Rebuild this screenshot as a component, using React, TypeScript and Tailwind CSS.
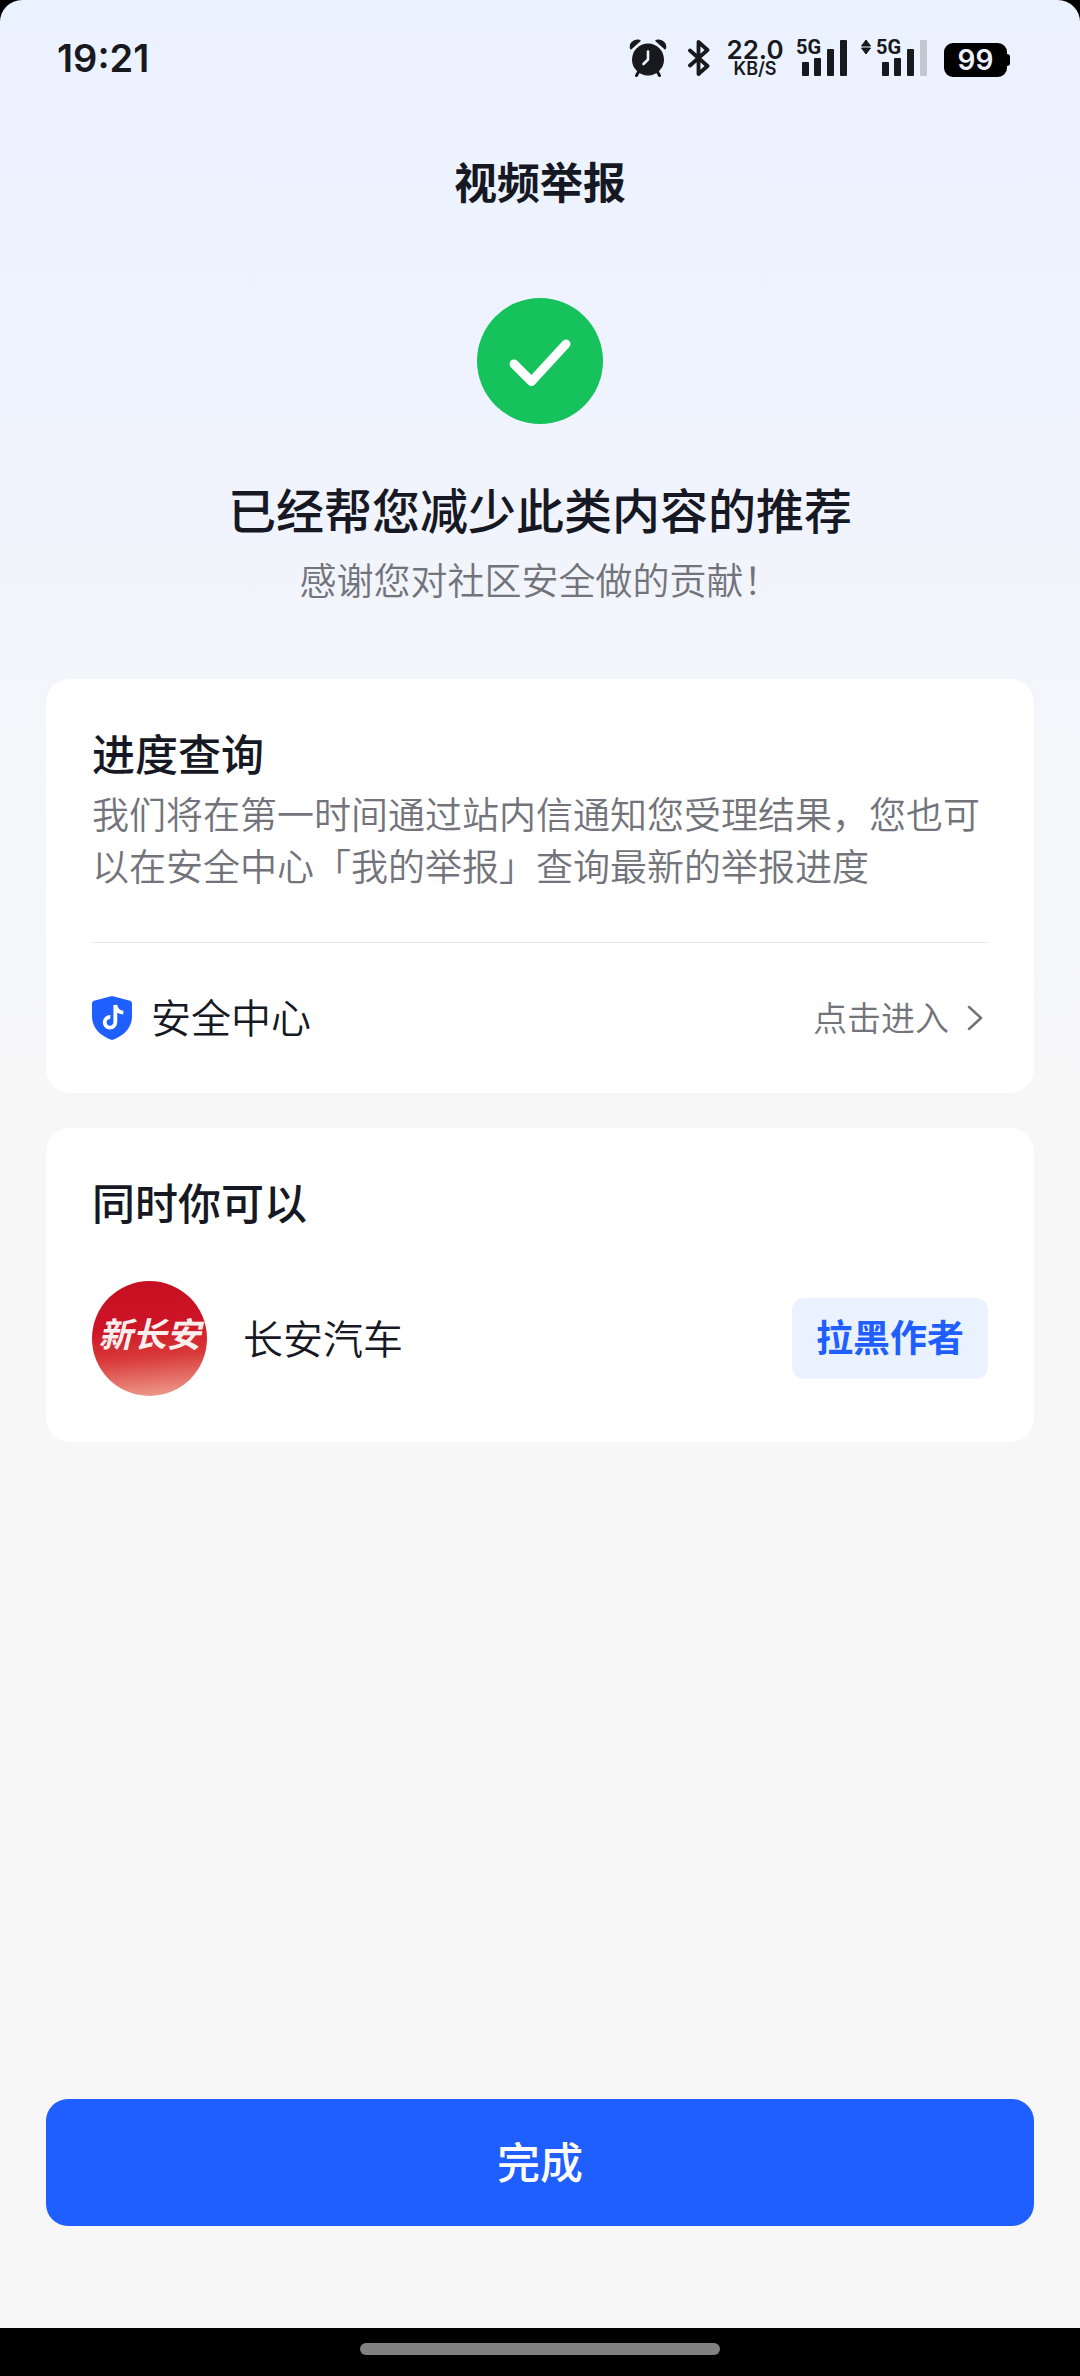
import type { ReactNode } from "react";

function AlarmIcon() {
  return (
    <svg viewBox="0 0 38 38" className="h-[38px] w-[38px]" aria-hidden="true">
      <g fill="#17191c">
        <circle cx="19" cy="20.500" r="16" />
        <path d="M1 9.500C-1 3 8 -2 12 1.800L2.500 10.200C1.800 10.600 1.200 10.300 1 9.500ZM37 9.500C39 3 30 -2 26 1.800L35.500 10.200C36.200 10.600 36.800 10.300 37 9.500Z" />
      </g>
      <path d="M10 32L7.500 36.500M28 32L30.500 36.500" stroke="#17191c" strokeWidth="3" strokeLinecap="round" />
      <path d="M19 12.500V20.500L14.500 25" fill="none" stroke="#edf2fe" strokeWidth="2.600" strokeLinecap="round" strokeLinejoin="round" />
    </svg>
  );
}

function BluetoothIcon() {
  return (
    <svg viewBox="0 0 22 38" className="h-[38px] w-[22px]" aria-hidden="true">
      <path
        d="M2 11.500L19.500 27L10.500 35V3L19.500 11L2 26.500"
        fill="none"
        stroke="#17191c"
        strokeWidth="3.800"
        strokeLinecap="round"
        strokeLinejoin="round"
      />
    </svg>
  );
}

function SignalIcon({ weak }: { weak?: boolean }) {
  return (
    <svg viewBox="0 -8 52 54" className="h-[54px] w-[52px]" role="img" aria-label="5G">
      <text x="0" y="15" fontFamily="Roboto, sans-serif" fontWeight="700" fontSize="20" fill="#17191c">
        5G
      </text>
      <g fill="#17191c">
        <rect x="6" y="23" width="7" height="14" rx="1" />
        <rect x="18" y="19" width="7" height="18" rx="1" />
        <rect x="31" y="10" width="7" height="27" rx="1" />
        <rect x="44" y="1" width="7" height="36" rx="1" fill={weak ? "#c3c7d1" : "#17191c"} />
      </g>
    </svg>
  );
}

function DataArrows() {
  return (
    <svg viewBox="0 0 10 38" className="h-[38px] w-[10px]" aria-hidden="true">
      <path d="M5 1L9.500 7H0.500ZM5 15L9.500 9H0.500Z" fill="#17191c" stroke="#17191c" strokeLinejoin="round" />
    </svg>
  );
}

function StatusBar() {
  return (
    <header className="flex h-[116px] items-center justify-between pr-[70px] pl-[57px] text-[#17191c]">
      <time className="font-[Inter,sans-serif] text-[38px] leading-none font-semibold">19:21</time>
      <div className="flex items-center">
        <AlarmIcon />
        <div className="w-[21px]" />
        <BluetoothIcon />
        <div className="flex w-[86px] flex-col items-center pl-1 font-[Inter,sans-serif] font-semibold">
          <span className="text-[26px] leading-[22px]">22.0</span>
          <span className="text-[18px] leading-[16px]">KB/S</span>
        </div>
        <SignalIcon />
        <div className="w-[13px]" />
        <DataArrows />
        <div className="w-[5px]" />
        <SignalIcon weak />
        <div className="ml-[16px] flex items-center pt-[3px]">
          <span className="flex h-[34px] w-[63px] items-center justify-center rounded-[9px] bg-black font-[Inter,sans-serif] text-[28px] leading-none font-semibold text-[#edf2fe]">
            99
          </span>
          <span className="h-[12px] w-[3px] rounded-r-sm bg-black" />
        </div>
      </div>
    </header>
  );
}

function ShieldIcon() {
  return (
    <svg viewBox="0 0 120 132" className="h-[44px] w-[40px]" aria-hidden="true">
      <path d="M60 0L114 14Q120 16 120 22V62C120 96 94 120 60 132C26 120 0 96 0 62V22Q0 16 6 14Z" fill="#1f5eff" />
      <path d="M55 63A16 16 0 1 0 70 79V27C72 41 80 49 94 50" fill="none" stroke="#fff" strokeWidth="11.500" />
    </svg>
  );
}

function Card({ children }: { children: ReactNode }) {
  return <section className="rounded-3xl bg-white px-[46px] pt-[43px]">{children}</section>;
}

export default function App() {
  return (
    <div className="flex min-h-screen flex-col bg-black font-['Noto_Sans_CJK_SC',sans-serif] text-[#161823]">
      <div className="flex grow flex-col rounded-t-[22px] bg-[#f7f7f7] bg-[linear-gradient(180deg,#ebf2ff_0px,#eff3ff_400px,#f3f5fa_640px,#f7f7f8_1080px)]">
        <StatusBar />
        <main className="flex grow flex-col px-[46px]">
          <h1 className="flex h-[132px] items-center justify-center pb-1 text-[43px] font-bold">视频举报</h1>
          <svg viewBox="0 0 126 126" className="mt-[50px] h-[126px] w-[126px] self-center" aria-hidden="true">
            <circle cx="63" cy="63" r="63" fill="#15c25b" />
            <path d="M37 66L54.500 83.500L89 46" fill="none" stroke="#fff" strokeWidth="9" strokeLinecap="round" strokeLinejoin="round" />
          </svg>
          <h2 className="mt-[54px] text-center text-[48px] leading-[60px] font-medium">已经帮您减少此类内容的推荐</h2>
          <p className="mt-[15px] text-center text-[37px] leading-[52px] font-[350] text-[#73747b]">感谢您对社区安全做的贡献！</p>
          <div className="mt-[74px] flex flex-col gap-[35px]">
            <Card>
              <h3 className="text-[43px] leading-[60px] font-medium">进度查询</h3>
              <p className="mt-[5px] text-[37px] leading-[52px] font-[350] text-[#73747b]">
                我们将在第一时间通过站内信通知您受理结果，您也可以在安全中心「我的举报」查询最新的举报进度
              </p>
              <a href="#safety" className="mt-[51px] flex h-[151px] items-center border-t border-[#e8e8e9]">
                <ShieldIcon />
                <span className="ml-[19px] pb-1 text-[40px] leading-[60px] font-[350]">安全中心</span>
                <span className="ml-auto pb-[3px] text-[34px] leading-[52px] font-[350] text-[#73747b]">点击进入</span>
                <svg viewBox="0 0 16 28" className="mr-[5px] ml-[18px] h-[28px] w-[16px]" aria-hidden="true">
                  <path d="M2 3L14 14L2 25" fill="none" stroke="#73747b" strokeWidth="2.500" strokeLinecap="round" strokeLinejoin="round" />
                </svg>
              </a>
            </Card>
            <Card>
              <h3 className="text-[43px] leading-[60px] font-medium">同时你可以</h3>
              <div className="flex items-center pt-[50px] pb-[46px]">
                <div className="flex h-[115px] w-[115px] items-center justify-center overflow-hidden rounded-full bg-[linear-gradient(175deg,#c60f22_0%,#cd1526_40%,#d93a3a_65%,#f0a394_100%)] pb-[12px] text-[34px] leading-none font-bold whitespace-nowrap text-[#fdeeee] italic">
                  新长安
                </div>
                <span className="ml-[36px] pb-1 text-[40px] leading-[60px] font-[350]">长安汽车</span>
                <button type="button" className="ml-auto h-[81px] rounded-xl bg-[#ebf2ff] px-6 pb-[3px] text-[37px] font-bold text-[#1f5eff]">
                  拉黑作者
                </button>
              </div>
            </Card>
          </div>
          <button type="button" className="mt-auto mb-[102px] h-[127px] rounded-[22px] bg-[#1f5eff] pb-1 text-[43px] font-medium text-white">
            完成
          </button>
        </main>
      </div>
      <footer className="flex h-[48px] justify-center pt-[15px]">
        <div className="h-[12px] w-1/3 rounded-full bg-[#808080]" />
      </footer>
    </div>
  );
}
